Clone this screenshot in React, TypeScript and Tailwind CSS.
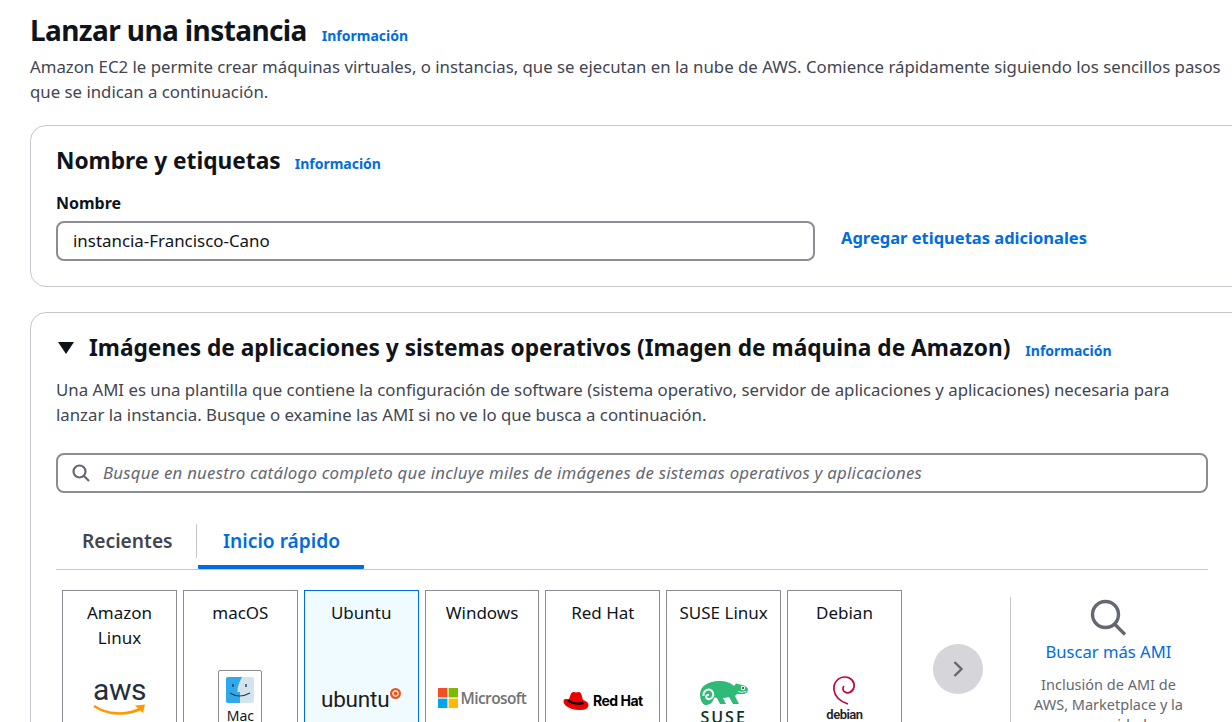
const font = '[font-family:"Noto_Sans",sans-serif]';

function InfoLink({ className = '' }: { className?: string }) {
  return <span className={`text-[14px] leading-5 font-bold text-[#006ce0] ${className}`}>Información</span>;
}

function AwsLogo() {
  return (
    <div className="flex flex-col items-center">
      <span className="text-[30px] leading-[26px] tracking-[-0.5px] text-[#232f3e] [font-family:Roboto,sans-serif]">aws</span>
      <svg width="54" height="14" viewBox="0 0 54 14">
        <path d="M1 3 C14 12 34 13 49 5" fill="none" stroke="#f90" strokeWidth="2.6" />
        <path d="M42 2.5 L52 1.5 L50 10 Z" fill="#f90" />
      </svg>
    </div>
  );
}

function MacLogo() {
  return (
    <div className="w-[44px] h-[60px] border border-[#8c8c94] rounded-[2px] flex flex-col items-center pt-[6px] bg-white">
      <svg width="28" height="26" viewBox="0 0 28 26">
        <rect width="28" height="26" rx="2" fill="#d5e3ee" />
        <path d="M2 0 H16 Q11 9 11.5 15 H14 V26 H2 Q0 26 0 24 V2 Q0 0 2 0 Z" fill="#2fa9ea" />
        <path d="M7 7 V10 M20 7 V10" stroke="#23395b" strokeWidth="1.4" fill="none" />
        <path d="M4 16 Q13 22 24 16" stroke="#23395b" strokeWidth="1.1" fill="none" />
      </svg>
      <span className="text-[14px] leading-5 text-[#0f141a] mt-[3px]">Mac</span>
    </div>
  );
}

function UbuntuLogo() {
  return (
    <div className="flex items-start">
      <span className="text-[22.5px] leading-[30px] tracking-[-0.2px] text-[#1c1c1c] [font-family:Roboto,sans-serif]">ubuntu</span>
      <svg width="11" height="11" viewBox="0 0 11 11" className="mt-[4px] ml-[1px]">
        <circle cx="5.5" cy="5.5" r="5.5" fill="#e95420" />
        <circle cx="5.5" cy="5.5" r="2.6" fill="none" stroke="#fff" strokeWidth="1.2" />
      </svg>
    </div>
  );
}

function MicrosoftLogo() {
  return (
    <div className="flex items-center gap-[3px]">
      <svg width="20" height="20" viewBox="0 0 20 20">
        <rect width="9.4" height="9.4" fill="#f25022" />
        <rect x="10.6" width="9.4" height="9.4" fill="#7fba00" />
        <rect y="10.6" width="9.4" height="9.4" fill="#00a4ef" />
        <rect x="10.6" y="10.6" width="9.4" height="9.4" fill="#ffb900" />
      </svg>
      <span className="text-[15.5px] leading-5 font-semibold tracking-[-0.6px] text-[#737373] [font-family:'Open_Sans',sans-serif]">Microsoft</span>
    </div>
  );
}

function RedHatLogo() {
  return (
    <div className="flex items-center gap-[4px]">
      <svg width="26" height="20" viewBox="0 0 26 20">
        <path d="M6 8 L8 2.5 Q9 0.5 11 1 L13 1.6 L15.5 1 Q17.5 0.8 18.2 3 L20 9 Q25.5 11 25.5 14 Q25.5 19 17 19 Q8 19 2.5 14.5 Q0 12.5 0.5 9.5 Q1 7.5 3 8 Z" fill="#e00" />
        <path d="M5.5 8.5 Q12 13 20 10.5 L20.8 13 Q12 15.5 4 10.6 Z" fill="#000" />
      </svg>
      <span className="text-[14px] leading-5 font-bold tracking-[-0.5px] text-black whitespace-nowrap [font-family:Inter,sans-serif]">Red Hat</span>
    </div>
  );
}

function SuseLogo() {
  return (
    <div className="flex flex-col items-center">
      <svg width="48" height="24" viewBox="0 0 48 24">
        <path d="M0 13 C0 5 9 0 19 0 C26 0 31 2 34 5 L36 2.5 Q38 3 40 3.5 Q46 4 48 8 Q48 12 44 13 L38 13 Q36 13 35 15 L39 23 L33 23 L29 16 Q26 17 23 17 L26 23 L20 23 L17 17 Q15 16 14 17 C13 22 9 24 6 24 C2 24 0 18 0 13 Z" fill="#30ba78" />
        <path d="M3.5 15 C3 9 9 7 12 10 C15 14 12 19 8 18 C5 17 6 13 9 14" fill="none" stroke="#fff" strokeWidth="2" />
        <circle cx="43" cy="7" r="2.2" fill="#fff" />
        <circle cx="43" cy="7" r="1" fill="#0c322c" />
        <path d="M38 10.5 Q42 12 46 10.5" fill="none" stroke="#fff" strokeWidth="0.8" />
      </svg>
      <span className="text-[16px] leading-5 tracking-[2px] font-semibold text-[#0c322c] [font-family:'Open_Sans',sans-serif] mt-[2px]">SUSE</span>
    </div>
  );
}

function DebianLogo() {
  return (
    <div className="flex flex-col items-center">
      <svg width="24" height="30" viewBox="0 0 24 30">
        <path d="M16 28 C10 26 3 22 2 14 C1 6 7 1 13 1 C19 1 23 6 22 11 C21 16 16 18 13 16 C11 15 10 12 12 10" fill="none" stroke="#c70036" strokeWidth="1.7" />
      </svg>
      <span className="mt-[1px] text-[13px] leading-4 font-semibold tracking-[-0.5px] text-[#222] [font-family:Roboto,sans-serif]">debian</span>
    </div>
  );
}

const tiles = [
  { name: 'Amazon Linux', logo: <AwsLogo />, top: 'pt-[27px]' },
  { name: 'macOS', logo: <MacLogo />, top: 'pt-[20px]' },
  { name: 'Ubuntu', logo: <UbuntuLogo />, top: 'pt-[34px]', selected: true },
  { name: 'Windows', logo: <MicrosoftLogo />, top: 'pt-[38px]' },
  { name: 'Red Hat', logo: <RedHatLogo />, top: 'pt-[41px]' },
  { name: 'SUSE Linux', logo: <SuseLogo />, top: 'pt-[31px]' },
  { name: 'Debian', logo: <DebianLogo />, top: 'pt-[26px]' },
];

export default function App() {
  return (
    <div className={`w-[1232px] h-[722px] overflow-hidden bg-white pl-[30px] pt-[12px] ${font} text-[#0f141a]`}>
      <div className="flex items-baseline gap-[15px]">
        <h1 className="text-[28px] leading-9 font-bold tracking-[-0.6px]">Lanzar una instancia</h1>
        <InfoLink />
      </div>
      <p className="mt-[6px] text-[16.8px] leading-[25px] text-[#424650] w-[1200px]">
        Amazon EC2 le permite crear máquinas virtuales, o instancias, que se ejecutan en la nube de AWS. Comience rápidamente siguiendo los sencillos pasos que se indican a continuación.
      </p>

      <section className="mt-[21px] w-[1230px] h-[162px] border border-[#c6c6cd] rounded-[16px] pl-[25px] pt-[20px]">
        <div className="flex items-baseline gap-[14px]">
          <h2 className="text-[22.7px] leading-[30px] font-bold">Nombre y etiquetas</h2>
          <InfoLink />
        </div>
        <div className="mt-[17px] text-[16px] leading-[20px] font-bold">Nombre</div>
        <div className="mt-[8px] flex items-center">
          <div className="w-[759px] h-[40px] border-2 border-[#8c8c94] rounded-[8px] pl-[15px] flex items-center text-[16.9px]">instancia-Francisco-Cano</div>
          <span className="ml-[26px] -mt-[6px] text-[16.5px] leading-5 font-bold text-[#006ce0]">Agregar etiquetas adicionales</span>
        </div>
      </section>

      <section className="mt-[25px] w-[1230px] h-[500px] border border-[#c6c6cd] rounded-[16px] pl-[25px] pt-[21px]">
        <div className="flex items-center">
          <svg width="18" height="14" viewBox="0 0 18 14" className="ml-[1px] mr-[14px]">
            <path d="M1 1 H17 L9 13 Z" fill="#0f141a" />
          </svg>
          <h2 className="text-[22.7px] leading-[28px] font-bold mr-[15px] whitespace-nowrap">Imágenes de aplicaciones y sistemas operativos (Imagen de máquina de Amazon)</h2>
          <InfoLink className="mt-[6px]" />
        </div>
        <p className="mt-[15px] w-[1150px] text-[16.8px] leading-[25px] text-[#424650]">
          Una AMI es una plantilla que contiene la configuración de software (sistema operativo, servidor de aplicaciones y aplicaciones) necesaria para lanzar la instancia. Busque o examine las AMI si no ve lo que busca a continuación.
        </p>

        <div className="mt-[26px] w-[1152px] h-[40px] border-2 border-[#8c8c94] rounded-[8px] flex items-center pl-[14px]">
          <svg width="18" height="18" viewBox="0 0 18 18" fill="none" stroke="#656871" strokeWidth="2.2">
            <circle cx="7.5" cy="7.5" r="6" />
            <path d="M12 12 L17 17" />
          </svg>
          <span className="ml-[13px] text-[16.8px] tracking-[0.25px] italic text-[#656871] whitespace-nowrap">Busque en nuestro catálogo completo que incluye miles de imágenes de sistemas operativos y aplicaciones</span>
        </div>

        <div className="mt-[31px] w-[1152px] h-[46px] border-b border-[#c6c6cd] flex">
          <div className="w-[141px] h-[34px] border-r border-[#c6c6cd] pl-[26px] text-[19.2px] leading-[34px] font-semibold text-[#424650]">Recientes</div>
          <div className="ml-[1px] w-[166px] h-[45px] border-b-[4px] border-[#006ce0] rounded-b-[1px] pl-[25px] text-[19.2px] leading-[34px] font-semibold text-[#006ce0]">Inicio rápido</div>
        </div>

        <div className="mt-[20px] flex">
          <div className="ml-[6.1px] w-[839.8px] grid grid-cols-7 gap-[6px]">
            {tiles.map((t) => (
              <div key={t.name} className={`h-[180px] border ${t.selected ? 'border-[#006ce0] bg-[#f0fbff]' : 'border-[#8c8c94]'} px-1 pt-[9px] flex flex-col items-center text-center overflow-hidden`}>
                <div className="h-[50px] text-[17px] leading-[25px]">{t.name}</div>
                <div className={t.top}>{t.logo}</div>
              </div>
            ))}
          </div>
          <div className="ml-[31.1px] mt-[54px] w-[50px] h-[50px] rounded-full bg-[#d5d5da] flex items-center justify-center">
            <svg width="12" height="18" viewBox="0 0 12 18" fill="none" stroke="#656871" strokeWidth="2.4">
              <path d="M2.5 2 L9.5 9 L2.5 16" />
            </svg>
          </div>
          <div className="ml-[27px] mt-[7px] w-[196px] h-[180px] border-l border-[#c6c6cd] flex flex-col items-center text-center">
            <svg width="37" height="37" viewBox="0 0 37 37" fill="none" stroke="#656871" strokeWidth="3.4" className="mt-[2px]">
              <circle cx="15.5" cy="15.5" r="13" />
              <path d="M24.5 25 L35 35.5" />
            </svg>
            <span className="mt-[4px] text-[16.6px] leading-[24px] text-[#006ce0]">Buscar más AMI</span>
            <span className="mt-[10px] px-[18px] text-[14.5px] leading-5 text-[#656871]">Inclusión de AMI de AWS, Marketplace y la comunidad</span>
          </div>
        </div>
      </section>
    </div>
  );
}
